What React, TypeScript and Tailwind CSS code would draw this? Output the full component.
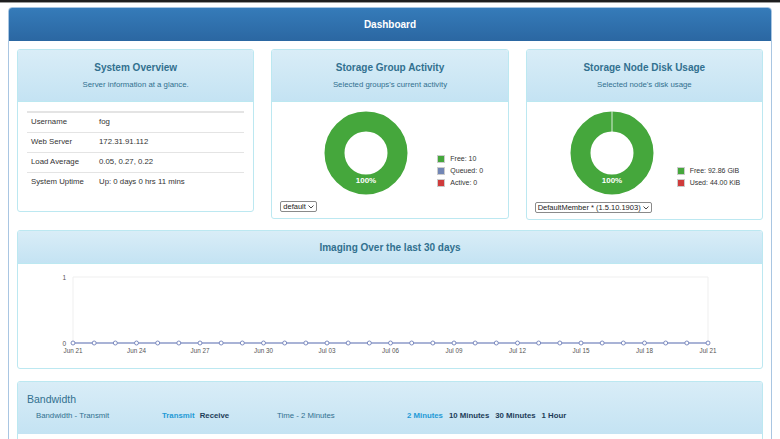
import React from 'react'

const labels = ['Jun 21', 'Jun 24', 'Jun 27', 'Jun 30', 'Jul 03', 'Jul 06', 'Jul 09', 'Jul 12', 'Jul 15', 'Jul 18', 'Jul 21']

function CardHeader({ title, subtitle }: { title: string; subtitle: string }) {
  return (
    <div className="border-b border-[#bce8f1] bg-linear-to-b from-[#d9edf7] to-[#c4e3f3] pt-[12px] pb-[11px] text-center text-[#31708f]">
      <p className="text-[10px] leading-[12px] font-bold">{title}</p>
      <p className="mt-[6px] text-[7.8px] leading-[10px]">{subtitle}</p>
    </div>
  )
}

function Donut({ split }: { split?: boolean }) {
  return (
    <svg className="block" width="84" height="84" viewBox="0 0 84 84">
      <circle cx="42" cy="42" r="31.5" fill="none" stroke="#45a73c" strokeWidth="20" />
      {split && <line x1="42" y1="0" x2="42" y2="21" stroke="#ffffff" strokeWidth="0.8" />}
      <text x="42" y="72" textAnchor="middle" fill="#ffffff" fontSize="8" fontWeight="bold" fontFamily="Liberation Sans, Arial, sans-serif">
        100%
      </text>
    </svg>
  )
}

function Legend({ items }: { items: { color: string; label: string }[] }) {
  return (
    <div className="mb-[6px]">
      {items.map((it) => (
        <div key={it.label} className="flex h-[12px] items-center gap-[6px] text-[7px] text-[#333]">
          <span className="h-[6px] w-[6px] outline outline-1 outline-[#ccc]" style={{ backgroundColor: it.color }} />
          <span>{it.label}</span>
        </div>
      ))}
    </div>
  )
}

function FakeSelect({ value }: { value: string }) {
  return (
    <span className="flex h-[11px] w-fit items-center gap-[2px] rounded-[2px] border border-[#8a8a8a] bg-white px-[2px] text-[7.5px] leading-none text-[#222]">
      {value}
      <svg className="block" width="6" height="4" viewBox="0 0 6 4">
        <path d="M0.5 0.5 L3 3 L5.5 0.5" fill="none" stroke="#333" strokeWidth="0.9" />
      </svg>
    </span>
  )
}

function Chart() {
  const left = 55
  const right = 690
  const top = 13
  const bottom = 79
  const step = (right - left) / 30
  const pts = Array.from({ length: 31 }, (_, i) => left + i * step)
  return (
    <svg className="block" width="746" height="104" viewBox="0 0 746 104" fontFamily="Liberation Sans, Arial, sans-serif">
      <line x1={left} y1={top} x2={right} y2={top} stroke="#efefef" />
      <line x1={left} y1={top} x2={left} y2={bottom} stroke="#efefef" />
      <line x1={right} y1={top} x2={right} y2={bottom} stroke="#efefef" />
      <text x="48" y={top + 2.5} fontSize="6.5" fill="#555" textAnchor="end">1</text>
      <text x="48" y={bottom + 2.5} fontSize="6.5" fill="#555" textAnchor="end">0</text>
      <line x1={left} y1={bottom} x2={right} y2={bottom} stroke="#8d9ac8" strokeWidth="1.4" />
      {pts.map((x, i) => (
        <circle key={i} cx={x} cy={bottom} r="2" fill="#ffffff" stroke="#7c8bc0" strokeWidth="1" />
      ))}
      {labels.map((l, i) => (
        <text key={l} x={left + i * 3 * step} y={bottom + 10} fontSize="6.3" fill="#555" textAnchor="middle">
          {l}
        </text>
      ))}
    </svg>
  )
}

export default function App() {
  const rows = [
    ['Username', 'fog'],
    ['Web Server', '172.31.91.112'],
    ['Load Average', '0.05, 0.27, 0.22'],
    ['System Uptime', 'Up: 0 days 0 hrs 11 mins'],
  ]

  return (
    <div className="h-[439px] w-[780px] overflow-hidden bg-white font-['Liberation_Sans',Arial,sans-serif]">
      <div className="h-[2px] bg-[#1e1e1e]" />
      <div className="h-[1px] bg-[#9a9a9a]" />
      <div className="h-[4px] bg-white" />

      <div className="ml-[8px] w-[764px] rounded-t-[4px] border border-[#a9c6e2]">
        <div className="flex h-[33px] items-center justify-center rounded-t-[3px] bg-linear-to-b from-[#357bb9] to-[#2b67a2] text-[10px] font-bold text-white">
          Dashboard
        </div>

        <div className="px-[8px] pt-[8px]">
          <div className="grid grid-cols-3 items-start gap-x-[17px]">
            <div className="overflow-hidden rounded-[3px] border border-[#bce8f1]">
              <CardHeader title="System Overview" subtitle="Server information at a glance." />
              <div className="px-[9px] pt-[9px] pb-[19px]">
                <table className="w-full text-[7.8px] text-[#333]">
                  <tbody>
                    {rows.map(([k, v], i) => (
                      <tr key={k} className={i === 0 ? 'h-[20px] border-t-2 border-[#e4e4e4]' : 'h-[20px] border-t border-[#e4e4e4]'}>
                        <td className="w-[72px] pl-[4px]">{k}</td>
                        <td>{v}</td>
                      </tr>
                    ))}
                  </tbody>
                </table>
              </div>
            </div>

            <div className="overflow-hidden rounded-[3px] border border-[#bce8f1]">
              <CardHeader title="Storage Group Activity" subtitle="Selected groups's current activity" />
              <div className="px-[8px] pt-[9px] pb-[6px]">
                <div className="flex items-end">
                  <div className="ml-[44px]">
                    <Donut />
                  </div>
                  <div className="ml-[30px]">
                    <Legend
                      items={[
                        { color: '#45a73c', label: 'Free: 10' },
                        { color: '#7286b5', label: 'Queued: 0' },
                        { color: '#cf3b3b', label: 'Active: 0' },
                      ]}
                    />
                  </div>
                </div>
                <div className="mt-[6px]">
                  <FakeSelect value="default" />
                </div>
              </div>
            </div>

            <div className="overflow-hidden rounded-[3px] border border-[#bce8f1]">
              <CardHeader title="Storage Node Disk Usage" subtitle="Selected node's disk usage" />
              <div className="px-[8px] pt-[9px] pb-[6px]">
                <div className="flex items-end">
                  <div className="ml-[35px]">
                    <Donut split />
                  </div>
                  <div className="ml-[24px]">
                    <Legend
                      items={[
                        { color: '#45a73c', label: 'Free: 92.86 GiB' },
                        { color: '#cf3b3b', label: 'Used: 44.00 KiB' },
                      ]}
                    />
                  </div>
                </div>
                <div className="mt-[7px]">
                  <FakeSelect value="DefaultMember * (1.5.10.1903)" />
                </div>
              </div>
            </div>
          </div>

          <div className="mt-[10px] overflow-hidden rounded-[3px] border border-[#bce8f1]">
            <div className="flex h-[33px] items-center justify-center border-b border-[#bce8f1] bg-linear-to-b from-[#d9edf7] to-[#c4e3f3] text-[10px] font-bold text-[#31708f]">
              Imaging Over the last 30 days
            </div>
            <Chart />
          </div>

          <div className="mt-[12px] overflow-hidden rounded-t-[3px] border border-[#bce8f1]">
            <div className="bg-linear-to-b from-[#d9edf7] to-[#c4e3f3] pt-[11px] pb-[13px] pl-[9px] text-[#31708f]">
              <p className="text-[10.5px] leading-[13px]">Bandwidth</p>
              <div className="mt-[5px] flex text-[7.8px] leading-[10px]">
                <span className="w-[135px] pl-[9px]">Bandwidth - Transmit</span>
                <span className="w-[115px]">
                  <b className="text-[#1f9ad6]">Transmit</b> <b className="ml-[3px] text-[#1c3c58]">Receive</b>
                </span>
                <span className="w-[130px]">Time - 2 Minutes</span>
                <span className="flex gap-[6px] font-bold text-[#1c3c58]">
                  <span className="text-[#1f9ad6]">2 Minutes</span>
                  <span>10 Minutes</span>
                  <span>30 Minutes</span>
                  <span>1 Hour</span>
                </span>
              </div>
            </div>
            <div className="h-[20px] bg-white" />
          </div>
        </div>
      </div>
    </div>
  )
}
